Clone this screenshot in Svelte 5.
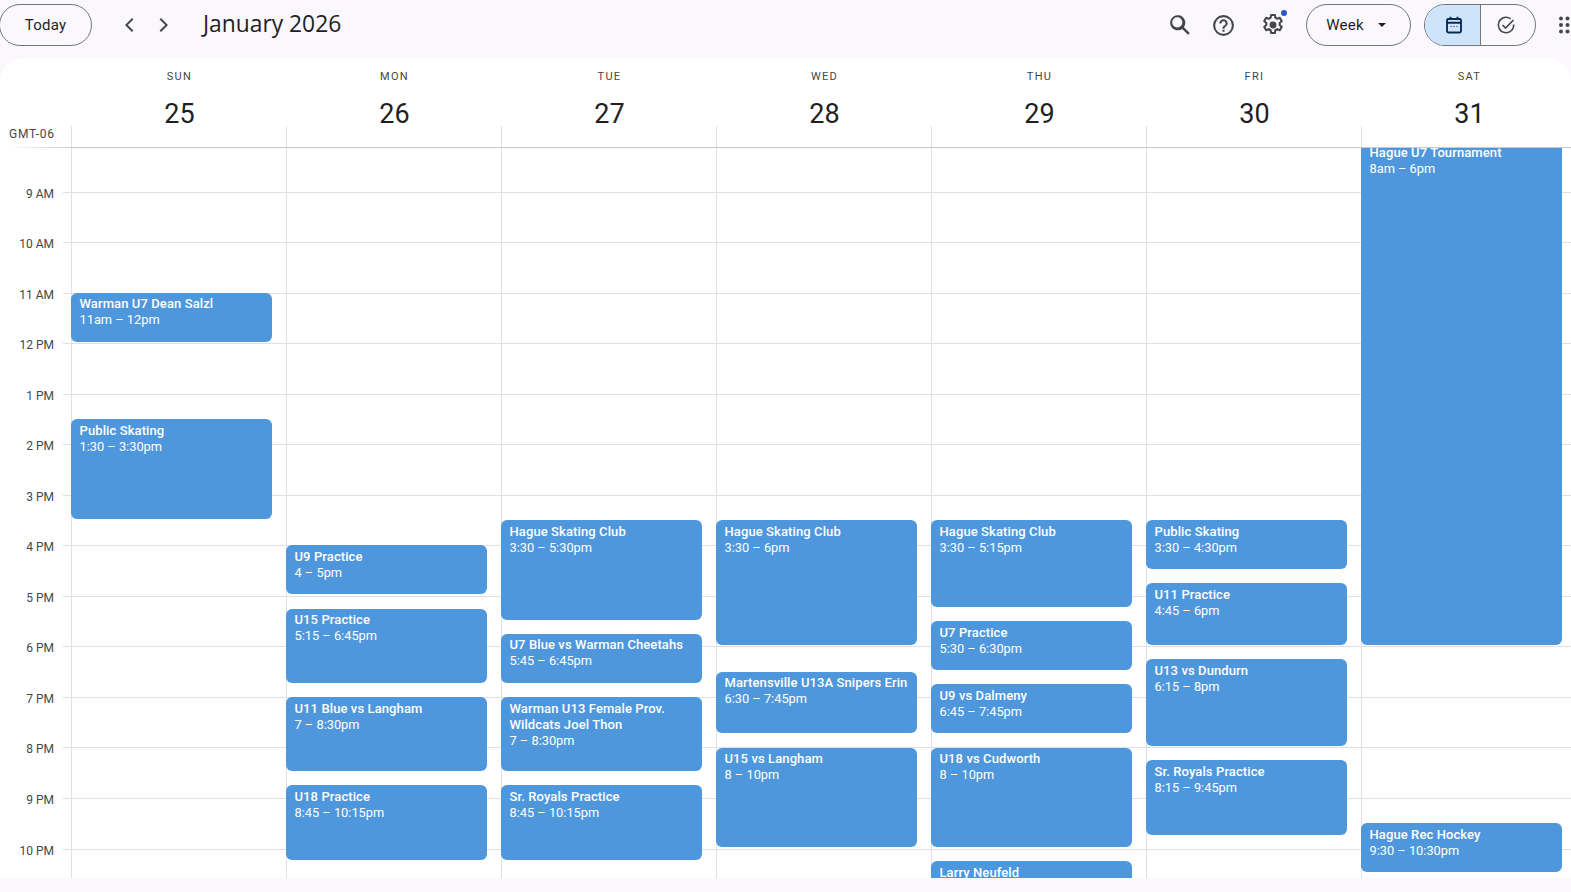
<script>
  const HOUR = 50.54;
  const days = [
    { name: "SUN", num: 25 },
    { name: "MON", num: 26 },
    { name: "TUE", num: 27 },
    { name: "WED", num: 28 },
    { name: "THU", num: 29 },
    { name: "FRI", num: 30 },
    { name: "SAT", num: 31 }
  ];
  const hours = ["9 AM", "10 AM", "11 AM", "12 PM", "1 PM", "2 PM", "3 PM", "4 PM", "5 PM", "6 PM", "7 PM", "8 PM", "9 PM", "10 PM"];
  const events = [
    { day: 0, start: 11, end: 12, title: "Warman U7 Dean Salzl", time: "11am – 12pm" },
    { day: 0, start: 13.5, end: 15.5, title: "Public Skating", time: "1:30 – 3:30pm" },
    { day: 1, start: 16, end: 17, title: "U9 Practice", time: "4 – 5pm" },
    { day: 1, start: 17.25, end: 18.75, title: "U15 Practice", time: "5:15 – 6:45pm" },
    { day: 1, start: 19, end: 20.5, title: "U11 Blue vs Langham", time: "7 – 8:30pm" },
    { day: 1, start: 20.75, end: 22.25, title: "U18 Practice", time: "8:45 – 10:15pm" },
    { day: 2, start: 15.5, end: 17.5, title: "Hague Skating Club", time: "3:30 – 5:30pm" },
    { day: 2, start: 17.75, end: 18.75, title: "U7 Blue vs Warman Cheetahs", time: "5:45 – 6:45pm" },
    { day: 2, start: 19, end: 20.5, title: "Warman U13 Female Prov. Wildcats Joel Thon", time: "7 – 8:30pm" },
    { day: 2, start: 20.75, end: 22.25, title: "Sr. Royals Practice", time: "8:45 – 10:15pm" },
    { day: 3, start: 15.5, end: 18, title: "Hague Skating Club", time: "3:30 – 6pm" },
    { day: 3, start: 18.5, end: 19.75, title: "Martensville U13A Snipers Erin", time: "6:30 – 7:45pm" },
    { day: 3, start: 20, end: 22, title: "U15 vs Langham", time: "8 – 10pm" },
    { day: 4, start: 15.5, end: 17.25, title: "Hague Skating Club", time: "3:30 – 5:15pm" },
    { day: 4, start: 17.5, end: 18.5, title: "U7 Practice", time: "5:30 – 6:30pm" },
    { day: 4, start: 18.75, end: 19.75, title: "U9 vs Dalmeny", time: "6:45 – 7:45pm" },
    { day: 4, start: 20, end: 22, title: "U18 vs Cudworth", time: "8 – 10pm" },
    { day: 4, start: 22.25, end: 23.25, title: "Larry Neufeld", time: "" },
    { day: 5, start: 15.5, end: 16.5, title: "Public Skating", time: "3:30 – 4:30pm" },
    { day: 5, start: 16.75, end: 18, title: "U11 Practice", time: "4:45 – 6pm" },
    { day: 5, start: 18.25, end: 20, title: "U13 vs Dundurn", time: "6:15 – 8pm" },
    { day: 5, start: 20.25, end: 21.75, title: "Sr. Royals Practice", time: "8:15 – 9:45pm" },
    { day: 6, start: 8, end: 18, title: "Hague U7 Tournament", time: "8am – 6pm" },
    { day: 6, start: 21.5, end: 22.5, title: "Hague Rec Hockey", time: "9:30 – 10:30pm" }
  ];
  // the grid is scrolled a little past 8am, hence the offset
  const top = (h) => (h - 8) * HOUR - 6;
  const eventTop = (h) => (h - 8) * HOUR - 6.9;
</script>

<div class="page">
  <div class="topbar">
    <button class="today">Today</button>
    <div class="nav">
      <svg width="24" height="24" viewBox="0 0 24 24"><path d="M15.4 6.4 14 5l-7 7 7 7 1.4-1.4L9.8 12z" fill="#444746" /></svg>
      <svg width="24" height="24" viewBox="0 0 24 24"><path d="M8.6 6.4 10 5l7 7-7 7-1.4-1.4 5.6-5.6z" fill="#444746" /></svg>
    </div>
    <div class="title">January 2026</div>
    <div class="spacer"></div>
    <svg class="ico search" width="26" height="26" viewBox="0 0 24 24"><path d="M21 19.4 15.6 14a7 7 0 1 0-1.6 1.6l5.4 5.4zM9.5 14.2a4.7 4.7 0 1 1 0-9.4 4.7 4.7 0 0 1 0 9.4z" fill="#444746" /></svg>
    <svg class="ico help" width="25" height="25" viewBox="0 0 24 24"><path d="M12 2a10 10 0 1 0 0 20 10 10 0 0 0 0-20zm0 18a8 8 0 1 1 0-16 8 8 0 0 1 0 16zm-1-4h2v2h-2zm1-10a4 4 0 0 0-4 4h2a2 2 0 1 1 4 0c0 2-3 1.75-3 5h2c0-2.25 3-2.5 3-5a4 4 0 0 0-4-4z" fill="#444746" /></svg>
    <div class="gear">
      <svg class="ico" width="26" height="26" viewBox="0 0 24 24">
        <path d="M10.2 2.8h3.6l.4 2.6c.6.2 1.2.5 1.7.9l2.4-1 1.8 3.2-2 1.6a6.5 6.5 0 0 1 0 1.9l2 1.6-1.8 3.2-2.4-1c-.5.4-1.1.7-1.7.9l-.4 2.6h-3.6l-.4-2.6c-.6-.2-1.2-.5-1.7-.9l-2.4 1-1.8-3.2 2-1.6a6.5 6.5 0 0 1 0-1.9l-2-1.6 1.8-3.2 2.4 1c.5-.4 1.1-.7 1.7-.9z" fill="none" stroke="#444746" stroke-width="1.9" stroke-linejoin="round" />
        <circle cx="12" cy="12" r="3.2" fill="#444746" />
      </svg>
      <span class="dot"></span>
    </div>
    <button class="week">Week <span class="caret"></span></button>
    <div class="toggle">
      <div class="seg on">
        <svg width="20" height="20" viewBox="0 0 20 20" fill="none" stroke="#0a2a52" stroke-width="1.9"><rect x="3" y="4" width="14" height="13.5" rx="1.5" /><path d="M3 7.8h14M6.5 1.8v3M13.5 1.8v3" /><path d="M6.5 11.5h1M9.5 11.5h1M12.5 11.5h1" stroke-width="1" /></svg>
      </div>
      <div class="seg off">
        <svg width="20" height="20" viewBox="0 0 20 20" fill="none" stroke="#444746" stroke-width="1.5"><path d="M17.7 9.5a7.7 7.7 0 1 1-3-5.6" /><path d="M6.5 10l3 3L17.5 5" stroke-width="1.7" /></svg>
      </div>
    </div>
    <svg class="apps" width="20" height="20" viewBox="0 0 20 20" fill="#444746">
      {#each [3.5, 10, 16.5] as cy}
        {#each [3, 9.5, 16] as cx}
          <circle {cx} {cy} r="2" />
        {/each}
      {/each}
    </svg>
  </div>

  <div class="panel">
    <div class="head">
      <div class="gutter-head"><span class="tz">GMT-06</span></div>
      {#each days as d}
        <div class="day-head">
          <div class="dname">{d.name}</div>
          <div class="dnum">{d.num}</div>
        </div>
      {/each}
    </div>
    <div class="body">
      <div class="gutter">
        {#each hours as h, i}
          <span class="hour" style="top:{top(9 + i)}px">{h}</span>
        {/each}
      </div>
      <div class="cols">
        {#each hours as h, i}
          <div class="line" style="top:{top(9 + i)}px"></div>
        {/each}
        {#each days as d, i}
          <div class="col">
            {#each events.filter((e) => e.day === i) as e}
              <div class="event" style="top:{eventTop(e.start)}px;height:{(e.end - e.start) * HOUR - 1.5}px">
                <div class="etitle">{e.title}</div>
                {#if e.time}<div class="etime">{e.time}</div>{/if}
              </div>
            {/each}
          </div>
        {/each}
      </div>
    </div>
  </div>
</div>

<style>
  :global(body) {
    margin: 0;
    overflow: hidden;
    background: #faf8fd;
    font-family: Roboto, "Liberation Sans", sans-serif;
  }
  .page {
    height: 892px;
    width: 1571px;
    overflow: hidden;
    display: flex;
    flex-direction: column;
  }
  .topbar {
    height: 58px;
    flex: none;
    display: flex;
    align-items: center;
    padding-bottom: 8px;
    box-sizing: border-box;
  }
  .today {
    width: 93px;
    height: 42px;
    margin-left: -1px;
    border: 1px solid #747775;
    border-radius: 21px;
    background: none;
    font: 400 15px Roboto, sans-serif;
    letter-spacing: 0.2px;
    color: #1f1f1f;
  }
  .nav {
    display: flex;
    gap: 9px;
    margin-left: 26px;
  }
  .title {
    margin-left: 28px;
    padding-bottom: 3px;
    font: 400 22.8px "Open Sans", sans-serif;
    color: #1f1f1f;
  }
  .spacer {
    flex: 1;
  }
  .ico {
    display: block;
    flex: none;
  }
  .search {
    margin-right: 18px;
  }
  .help {
    margin-right: 24px;
  }
  .gear {
    position: relative;
    margin-right: 20px;
  }
  .dot {
    position: absolute;
    top: -2px;
    right: -1px;
    width: 6px;
    height: 6px;
    background: #2a56c6;
    border-radius: 50%;
  }
  .week {
    width: 105px;
    height: 42px;
    padding: 0 10px 0 6px;
    border: 1px solid #747775;
    border-radius: 21px;
    background: none;
    font: 400 15px Roboto, sans-serif;
    letter-spacing: 0.2px;
    color: #1f1f1f;
    margin-right: 13px;
  }
  .caret {
    display: inline-block;
    margin-left: 10px;
    vertical-align: 3px;
    border: 4px solid transparent;
    border-top-color: #1f1f1f;
    border-bottom: 0;
  }
  .toggle {
    display: flex;
    width: 112px;
    height: 42px;
    box-sizing: border-box;
    border: 1px solid #747775;
    border-radius: 21px;
    overflow: hidden;
    flex: none;
  }
  .seg {
    display: flex;
    align-items: center;
    justify-content: center;
    box-sizing: border-box;
  }
  .seg.on {
    width: 56px;
    background: #cde4fa;
    border-right: 1px solid #747775;
    padding-left: 4px;
  }
  .seg.off {
    flex: 1;
    padding-right: 4px;
  }
  .apps {
    margin-left: 22.5px;
    margin-right: -7px;
    flex: none;
  }
  .panel {
    flex: none;
    height: 820px;
    background: #fff;
    border-radius: 24px 24px 0 0;
    overflow: hidden;
    display: flex;
    flex-direction: column;
  }
  .head {
    height: 90px;
    flex: none;
    display: flex;
  }
  .gutter-head {
    width: 71px;
    flex: none;
    position: relative;
  }
  .gutter-head::after {
    content: "";
    position: absolute;
    left: 10px;
    right: 0;
    bottom: 0;
    height: 1px;
    background: linear-gradient(to right, transparent, #c8c8cc);
  }
  .tz {
    position: absolute;
    left: 9px;
    top: 69px;
    font-size: 12px;
    color: #444746;
    letter-spacing: 0.8px;
  }
  .day-head {
    width: 215px;
    flex: none;
    box-sizing: border-box;
    text-align: center;
    position: relative;
    padding-top: 12px;
    padding-left: 2px;
    border-bottom: 1px solid #c8c8cc;
  }
  .day-head::before {
    content: "";
    position: absolute;
    left: 0;
    bottom: 0;
    height: 21px;
    border-left: 1px solid #dfdfe8;
  }
  .dname {
    font-size: 11px;
    font-weight: 400;
    letter-spacing: 1.3px;
    color: #444746;
    line-height: 13px;
  }
  .dnum {
    font-size: 27px;
    line-height: 32px;
    margin-top: 15px;
    color: #1f1f1f;
  }
  .body {
    flex: 1;
    display: flex;
    position: relative;
    overflow: hidden;
  }
  .gutter {
    width: 71px;
    flex: none;
    position: relative;
  }
  .hour {
    position: absolute;
    right: 17px;
    font-size: 12px;
    line-height: 14px;
    margin-top: -6px;
    color: #444746;
  }
  .cols {
    flex: 1;
    display: flex;
    position: relative;
    margin-left: -8px;
    padding-left: 8px;
  }
  .line {
    position: absolute;
    left: 0;
    right: 0;
    height: 1px;
    background: #dfdfe8;
    margin-top: -1px;
  }
  .col {
    width: 215px;
    flex: none;
    box-sizing: border-box;
    border-left: 1px solid #dfdfe8;
    position: relative;
  }
  .event {
    position: absolute;
    left: -1px;
    width: 201px;
    box-sizing: border-box;
    padding: 3.5px 8.5px;
    background: #4f97dd;
    border-radius: 6px;
    color: #fff;
    font-size: 13px;
    line-height: 16px;
    overflow: hidden;
  }
  .etitle {
    font-weight: 500;
    letter-spacing: 0.1px;
  }
  .etime {
    font-size: 12.8px;
  }
</style>
